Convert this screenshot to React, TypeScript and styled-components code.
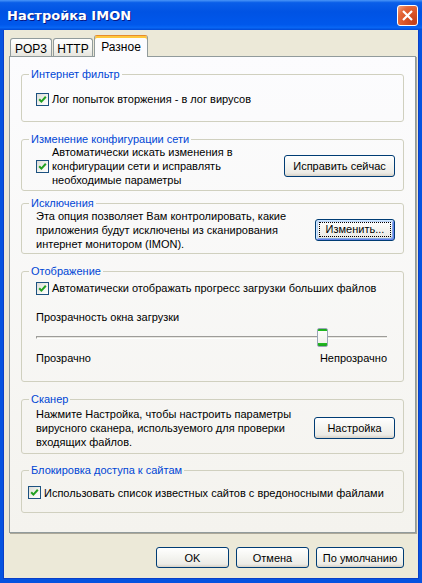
import React from "react";
import styled, { createGlobalStyle, css } from "styled-components";

const GlobalStyle = createGlobalStyle`
  html, body { margin: 0; padding: 0; background: #0055e5; }
  body {
    font-family: "Liberation Sans", Arial, sans-serif;
    font-size: 11px;
    color: #000;
  }
  * { box-sizing: border-box; }
`;

const Window = styled.div`
  width: 422px;
  height: 583px;
  display: flex;
  flex-direction: column;
  overflow: hidden;
`;

const TitleBar = styled.div`
  height: 30px;
  flex: none;
  display: flex;
  align-items: center;
  justify-content: space-between;
  padding: 0 4px 0 7px;
  background: linear-gradient(
    180deg,
    #4a96f8 0%,
    #0a5ee8 9%,
    #0053e4 40%,
    #0058ec 82%,
    #0866f4 92%,
    #0049d6 100%
  );
`;

const Title = styled.span`
  color: #fff;
  font-family: "DejaVu Sans", sans-serif;
  font-weight: bold;
  font-size: 13px;
  text-shadow: 1px 1px 0 #0a1883;
`;

const CloseButton = styled.div`
  width: 21px;
  height: 21px;
  border: 1px solid #fff;
  border-radius: 3px;
  background: radial-gradient(
    circle at 85% 85%,
    #c2401a 0%,
    #dc5628 45%,
    #e4683a 70%,
    #f4a585 100%
  );
  display: grid;
  place-items: center;
`;

const Frame = styled.div`
  flex: 1;
  display: flex;
  flex-direction: column;
  background: #ece9d8;
  border-style: solid;
  border-color: #0553e0;
  border-width: 0 3px 4px 3px;
  box-shadow: inset 1px 0 0 #0a3fc8, inset -1px 0 0 #0a3fc8, inset 0 -1px 0 #0a3fc8;
  padding: 5px 3px 0 6px;
`;

const TabStrip = styled.div`
  height: 22px;
  margin-bottom: -1px;
  display: flex;
  align-items: flex-end;
  padding-left: 1px;
  position: relative;
  z-index: 1;
`;

const Tab = styled.div<{ $w: number; $active?: boolean }>`
  width: ${(p) => p.$w}px;
  display: flex;
  align-items: center;
  justify-content: center;
  border: 1px solid #919b9c;
  border-bottom: none;
  border-radius: 3px 3px 0 0;
  ${(p) =>
    p.$active
      ? css`
          height: 22px;
          padding-top: 1px;
          font-size: 12px;
          background: #fcfcfe;
          border-top: 1px solid #e68b2c;
          box-shadow: inset 0 2px 0 #ffc73c;
        `
      : css`
          height: 18px;
          margin-bottom: 1px;
          margin-right: 1px;
          font-size: 12px;
          padding-top: 2px;
          background: linear-gradient(180deg, #ffffff 0%, #f3f3ef 60%, #e6e5de 100%);
        `}
`;

const Panel = styled.div`
  height: 477px;
  flex: none;
  display: flex;
  flex-direction: column;
  border: 1px solid #919b9c;
  box-shadow: 1px 1px 0 #aca899;
  background: linear-gradient(180deg, #fcfcfe 0%, #f4f3ee 100%);
  padding: 10px 11px 0 11px;
`;

const GroupFrame = styled.fieldset<{ $h: number; $mt: number }>`
  height: ${(p) => p.$h}px;
  margin: ${(p) => p.$mt}px 0 0 0;
  padding: 0;
  min-width: 0;
  flex: none;
  border: 1px solid #d0d0bf;
  border-radius: 3px;
`;

const Legend = styled.legend`
  margin-left: 7px;
  padding: 0 2px;
  line-height: 14px;
  color: #0046d5;
`;

const GroupBody = styled.div<{ $pl: number; $pr: number }>`
  display: flex;
  align-items: center;
  justify-content: space-between;
  padding: 0 ${(p) => p.$pr}px 4px ${(p) => p.$pl}px;
`;

const ColumnBody = styled.div`
  display: flex;
  flex-direction: column;
  padding: 3px 16px 0 14px;
`;

const CheckLabel = styled.label`
  display: flex;
  align-items: center;
  gap: 3px;
  line-height: 14px;
  white-space: nowrap;
`;

const CheckBox = styled.span`
  width: 13px;
  height: 13px;
  flex: none;
  border: 1px solid #1c5180;
  background: linear-gradient(135deg, #dcdcd7 0%, #f4f4f0 60%, #ffffff 100%);
  display: grid;
  place-items: center;
`;

const Text = styled.div`
  line-height: 14px;
  white-space: nowrap;
`;

const Caption = styled.div<{ $mt?: number }>`
  line-height: 14px;
  margin-top: ${(p) => p.$mt ?? 0}px;
  white-space: nowrap;
`;

const Button = styled.div<{ $w: number; $h?: number; $focused?: boolean }>`
  width: ${(p) => p.$w}px;
  height: ${(p) => p.$h ?? 22}px;
  flex: none;
  display: flex;
  align-items: center;
  justify-content: center;
  border: 1px solid #003c74;
  border-radius: 3px;
  background: linear-gradient(180deg, #ffffff 0%, #f5f5f1 45%, #ecebe6 85%, #d6d0c5 100%);
  white-space: nowrap;
  ${(p) =>
    p.$focused &&
    css`
      box-shadow: inset 1px 1px 0 #cee7ff, inset -1px -1px 0 #6982ee, inset 2px 2px 0 #bcd4f6,
        inset -2px -2px 0 #89ade4;
    `}
`;

const FocusRing = styled.span`
  border: 1px dotted #000;
  padding: 0 6px;
  line-height: 13px;
`;

const Slider = styled.div`
  position: relative;
  height: 19px;
  margin-top: 4px;
  display: flex;
  align-items: center;
`;

const Track = styled.div`
  flex: 1;
  height: 3px;
  border-top: 1px solid #9d9c99;
  border-bottom: 1px solid #ffffff;
  border-left: 1px solid #9d9c99;
  background: #e8e7e0;
`;

const Thumb = styled.div`
  position: absolute;
  top: 0;
  width: 11px;
  height: 19px;
  border: 1px solid #9aa6b8;
  border-radius: 2px;
  background: linear-gradient(
    180deg,
    #1ca01c 0,
    #21c021 2px,
    #fdfdfb 2px,
    #f1f1ec 14px,
    #21c021 14px,
    #1ca01c 100%
  );
`;

const SliderLabels = styled.div`
  display: flex;
  justify-content: space-between;
  margin-top: 4px;
  line-height: 14px;
`;

const Footer = styled.div`
  display: flex;
  justify-content: flex-end;
  gap: 7px;
  margin-top: 14px;
  padding-right: 12px;
`;

const LEGEND_HEIGHT = 14;

type GroupProps = {
  title: string;
  h: number;
  mt?: number;
  pl?: number;
  pr?: number;
  children: React.ReactNode;
};

// A titled group box; the body fills what is left under the caption and
// centres its row vertically.
const Group = ({ title, h, mt = 0, pl = 14, pr = 8, children }: GroupProps) => (
  <GroupFrame $h={h} $mt={mt}>
    <Legend>{title}</Legend>
    <GroupBody $pl={pl} $pr={pr} style={{ height: h - LEGEND_HEIGHT - 1 }}>
      {children}
    </GroupBody>
  </GroupFrame>
);

const Check = () => (
  <CheckBox>
    <svg width="9" height="9" viewBox="0 0 9 9">
      <polyline
        points="1.2,4.2 3.4,6.6 7.8,1.8"
        fill="none"
        stroke="#21a121"
        strokeWidth="2"
      />
    </svg>
  </CheckBox>
);

const SLIDER_WIDTH = 350;
const THUMB_WIDTH = 11;
const opacityValue = 83;

export default function App() {
  const thumbLeft = Math.round(((SLIDER_WIDTH - THUMB_WIDTH) * opacityValue) / 100);

  return (
    <>
      <GlobalStyle />
      <Window>
        <TitleBar>
          <Title>Настройка IMON</Title>
          <CloseButton>
            <svg width="11" height="11" viewBox="0 0 11 11">
              <path d="M1 1L10 10M10 1L1 10" stroke="#fff" strokeWidth="2.2" />
            </svg>
          </CloseButton>
        </TitleBar>
        <Frame>
          <TabStrip>
            <Tab $w={42}>POP3</Tab>
            <Tab $w={40}>HTTP</Tab>
            <Tab $w={54} $active>
              Разное
            </Tab>
          </TabStrip>
          <Panel>
            <Group title="Интернет фильтр" h={55}>
              <CheckLabel>
                <Check />
                Лог попыток вторжения - в лог вирусов
              </CheckLabel>
            </Group>

            <Group title="Изменение конфигурации сети" h={59} mt={10}>
              <CheckLabel>
                <Check />
                <Text>
                  Автоматически искать изменения в
                  <br />
                  конфигурации сети и исправлять
                  <br />
                  необходимые параметры
                </Text>
              </CheckLabel>
              <Button $w={111}>Исправить сейчас</Button>
            </Group>

            <Group title="Исключения" h={58} mt={5}>
              <Text>
                Эта опция позволяет Вам контролировать, какие
                <br />
                приложения будут исключены из сканирования
                <br />
                интернет монитором (IMON).
              </Text>
              <Button $w={80} $focused>
                <FocusRing>Изменить...</FocusRing>
              </Button>
            </Group>

            <GroupFrame $h={118} $mt={10}>
              <Legend>Отображение</Legend>
              <ColumnBody>
                <CheckLabel>
                  <Check />
                  Автоматически отображать прогресс загрузки больших файлов
                </CheckLabel>
                <Caption $mt={15}>Прозрачность окна загрузки</Caption>
                <Slider>
                  <Track />
                  <Thumb style={{ left: thumbLeft }} />
                </Slider>
                <SliderLabels>
                  <span>Прозрачно</span>
                  <span>Непрозрачно</span>
                </SliderLabels>
              </ColumnBody>
            </GroupFrame>

            <Group title="Сканер" h={62} mt={10}>
              <Text>
                Нажмите Настройка, чтобы настроить параметры
                <br />
                вирусного сканера, используемого для проверки
                <br />
                входящих файлов.
              </Text>
              <Button $w={81}>Настройка</Button>
            </Group>

            <Group title="Блокировка доступа к сайтам" h={50} mt={9} pl={6}>
              <CheckLabel>
                <Check />
                Использовать список известных сайтов с вредоносными файлами
              </CheckLabel>
            </Group>
          </Panel>
          <Footer>
            <Button $w={73} $h={21}>
              OK
            </Button>
            <Button $w={73} $h={21}>
              Отмена
            </Button>
            <Button $w={88} $h={21}>
              По умолчанию
            </Button>
          </Footer>
        </Frame>
      </Window>
    </>
  );
}
